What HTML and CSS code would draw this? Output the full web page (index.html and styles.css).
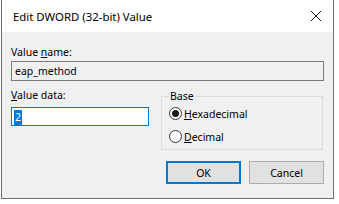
FILE: index.html
```html
<!DOCTYPE html>
<html lang="en">
<head>
  <meta charset="UTF-8">
  <title>Edit DWORD (32-bit) Value</title>
  <link rel="stylesheet" href="styles.css">
</head>
<body>
  <div class="dialog">
    <div class="title-bar">
      <span class="title">Edit DWORD (32-bit) Value</span>
      <svg class="close-icon" width="12" height="12" viewBox="0 0 12 12">
        <path d="M1 1 L11 11 M11 1 L1 11" stroke="#1a1a1a" stroke-width="1" fill="none"/>
      </svg>
    </div>
    <div class="dialog-body">
      <div class="label">Value <u>n</u>ame:</div>
      <div class="text-field readonly">eap_method</div>

      <div class="data-row">
        <div class="data-col">
          <div class="label"><u>V</u>alue data:</div>
          <div class="text-field focused"><span class="selected">2</span></div>
        </div>
        <fieldset class="base-group">
          <legend>Base</legend>
          <div class="radio-row">
            <span class="radio checked"></span>
            <span><u>H</u>exadecimal</span>
          </div>
          <div class="radio-row">
            <span class="radio"></span>
            <span><u>D</u>ecimal</span>
          </div>
        </fieldset>
      </div>

      <div class="buttons">
        <button class="btn default">OK</button>
        <button class="btn">Cancel</button>
      </div>
    </div>
  </div>
</body>
</html>
```

FILE: styles.css
```css
body {
  margin: 0;
  background: #fff;
  font-family: 'Noto Sans', 'Open Sans', sans-serif;
  font-size: 10.5px;
  color: #000;
}
.dialog {
  width: 333px;
  height: 199px;
  margin-left: 1px;
  box-sizing: border-box;
  border: 1px solid #6f6f6f;
  border-top: none;
  background: #f0f0f0;
}
.title-bar {
  height: 32px;
  background: #fff;
  display: flex;
  align-items: center;
  justify-content: space-between;
  padding: 0 10px 0 11px;
  font-size: 11.4px;
}
.close-icon {
  margin-right: 1px;
}
.dialog-body {
  padding: 12px 9px 0 9px;
}
.label {
  line-height: 16px;
  height: 16px;
}
.text-field {
  box-sizing: border-box;
  height: 20px;
  line-height: 18px;
  padding-left: 3px;
  border: 1px solid #7a7a7a;
}
.text-field.readonly {
  margin-top: 1px;
  background: #f0f0f0;
}
.text-field.focused {
  margin-top: 4px;
  width: 138px;
  height: 19px;
  line-height: 17px;
  padding-left: 2px;
  border-color: #0078d7;
  background: #fff;
}
.selected {
  display: inline-block;
  background: #0078d7;
  color: #fff;
  padding: 0 1px;
  line-height: 15px;
  vertical-align: middle;
}
.data-row {
  display: flex;
  margin-top: 6px;
}
.data-col {
  width: 150px;
}
.base-group {
  margin: 1px 0 0 0;
  padding: 0 0 0 7px;
  width: 162px;
  height: 62px;
  box-sizing: border-box;
  border: 1px solid #dcdcdc;
}
.base-group legend {
  padding: 0 1px;
  margin-left: 0;
  line-height: 16px;
}
.radio-row {
  display: flex;
  align-items: center;
  gap: 2px;
  height: 23px;
}
.radio-row:first-of-type {
  margin-top: -2px;
}
.radio {
  width: 13px;
  height: 13px;
  box-sizing: border-box;
  border: 1px solid #333;
  border-radius: 50%;
  background: #fff;
  display: flex;
  align-items: center;
  justify-content: center;
}
.radio.checked::after {
  content: "";
  width: 7px;
  height: 7px;
  border-radius: 50%;
  background: #1a1a1a;
}
.buttons {
  display: flex;
  justify-content: flex-end;
  gap: 8px;
  margin-top: 11px;
}
.btn {
  width: 75px;
  height: 23px;
  box-sizing: border-box;
  border: 1px solid #adadad;
  background: #e1e1e1;
  font-family: inherit;
  font-size: 10.5px;
  padding: 0;
  color: #000;
}
.btn.default {
  border: 2px solid #0078d7;
}
```
